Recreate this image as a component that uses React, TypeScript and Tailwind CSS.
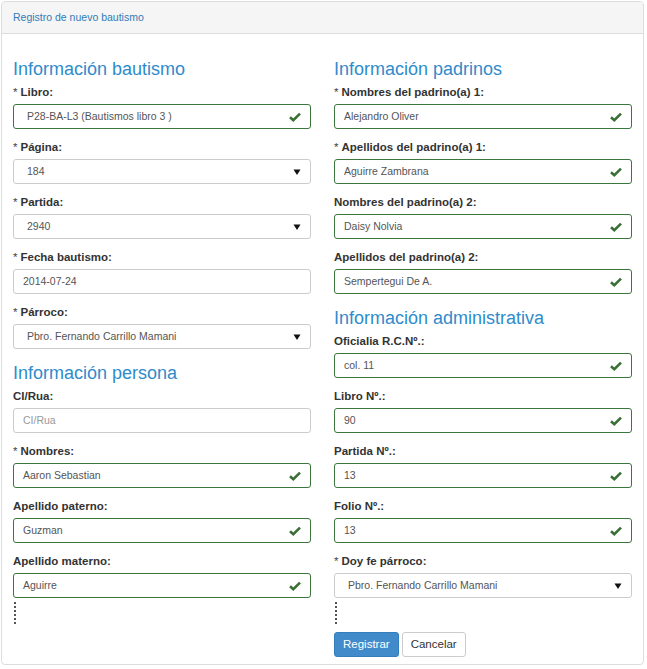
import React from 'react';

type Field = {
  label: string;
  value: string;
  required?: boolean;
  kind?: 'ok' | 'select' | 'plain' | 'placeholder';
};

const leftTop: Field[] = [
  { label: 'Libro:', value: 'P28-BA-L3 (Bautismos libro 3 )', required: true, kind: 'ok' },
  { label: 'Página:', value: '184', required: true, kind: 'select' },
  { label: 'Partida:', value: '2940', required: true, kind: 'select' },
  { label: 'Fecha bautismo:', value: '2014-07-24', required: true, kind: 'plain' },
  { label: 'Párroco:', value: 'Pbro. Fernando Carrillo Mamani', required: true, kind: 'select' },
];

const leftBottom: Field[] = [
  { label: 'CI/Rua:', value: 'CI/Rua', kind: 'placeholder' },
  { label: 'Nombres:', value: 'Aaron Sebastian', required: true, kind: 'ok' },
  { label: 'Apellido paterno:', value: 'Guzman', kind: 'ok' },
  { label: 'Apellido materno:', value: 'Aguirre', kind: 'ok' },
];

const rightTop: Field[] = [
  { label: 'Nombres del padrino(a) 1:', value: 'Alejandro Oliver', required: true, kind: 'ok' },
  { label: 'Apellidos del padrino(a) 1:', value: 'Aguirre Zambrana', required: true, kind: 'ok' },
  { label: 'Nombres del padrino(a) 2:', value: 'Daisy Nolvia', kind: 'ok' },
  { label: 'Apellidos del padrino(a) 2:', value: 'Sempertegui De A.', kind: 'ok' },
];

const rightBottom: Field[] = [
  { label: 'Oficialia R.C.Nº.:', value: 'col. 11', kind: 'ok' },
  { label: 'Libro Nº.:', value: '90', kind: 'ok' },
  { label: 'Partida Nº.:', value: '13', kind: 'ok' },
  { label: 'Folio Nº.:', value: '13', kind: 'ok' },
  { label: 'Doy fe párroco:', value: 'Pbro. Fernando Carrillo Mamani', required: true, kind: 'select' },
];

const Check = () => (
  <svg width="12" height="10" viewBox="0 0 12 10" className="shrink-0">
    <path d="M1 5.2 L4.3 8.2 L11 1.6" fill="none" stroke="#3a7035" strokeWidth="2.6" strokeLinejoin="miter" />
  </svg>
);

const Caret = () => (
  <svg width="8" height="8" viewBox="0 0 8 8" className="shrink-0">
    <path d="M0.5 1.5 H7.5 L4 7 Z" fill="#111" />
  </svg>
);

const FormField = ({ f }: { f: Field }) => {
  const kind = f.kind ?? 'plain';
  const border = kind === 'ok' ? 'border-[#3c763d]' : 'border-[#ccc]';
  const pad = kind === 'select' || f.label === 'Libro:' ? 'pl-[13px]' : 'pl-[9px]';
  const color = kind === 'placeholder' ? 'text-[#999]' : 'text-[#555]';
  return (
    <div className="mb-[12px]">
      <div className="h-[13px] mb-[5px] text-[11.5px] leading-[13px] font-bold text-[#333]">
        {f.required && <span className="font-normal text-[#444] mr-[3px]">*</span>}
        {f.label}
      </div>
      <div className={`h-[25px] border rounded-[3px] ${border} ${pad} pr-[9px] flex items-center justify-between bg-white`}>
        <span className={`text-[10.5px] ${color}`}>{f.value}</span>
        {kind === 'ok' && <Check />}
        {kind === 'select' && <Caret />}
      </div>
    </div>
  );
};

const Heading = ({ children }: { children: React.ReactNode }) => (
  <h3 className="h-[24px] leading-[24px] mb-[5px] text-[18px] text-[#2f8bcc]">{children}</h3>
);

const Dots = () => (
  <div className="flex flex-col gap-[2px] ml-[1px] -mt-[8px] mb-[6px]">
    {[0, 1, 2, 3, 4, 5].map((i) => (
      <div key={i} className="w-[2px] h-[2px] bg-[#555]" />
    ))}
  </div>
);

export default function App() {
  return (
    <div className="bg-white w-[647px] h-[669px] pt-[1px]" style={{ fontFamily: '"Liberation Sans", Arial, sans-serif' }}>
      <div className="ml-[1px] w-[643px] h-[664px] border border-[#ddd] rounded-[4px] overflow-hidden">
        <div className="h-[32px] bg-[#f5f5f5] border-b border-[#ddd] px-[11px] flex items-center">
          <span className="text-[10.5px] text-[#337ab7]">Registro de nuevo bautismo</span>
        </div>
        <div className="pt-[23px] px-[11px] grid grid-cols-2 gap-x-[23px]">
          <div>
            <Heading>Información bautismo</Heading>
            {leftTop.map((f) => <FormField key={f.label} f={f} />)}
            <Heading>Información persona</Heading>
            {leftBottom.map((f) => <FormField key={f.label} f={f} />)}
            <Dots />
          </div>
          <div>
            <Heading>Información padrinos</Heading>
            {rightTop.map((f) => <FormField key={f.label} f={f} />)}
            <Heading>Información administrativa</Heading>
            {rightBottom.map((f) => <FormField key={f.label} f={f} />)}
            <Dots />
            <div className="flex gap-[3px] mt-[8px]">
              <button className="h-[25px] px-[8px] rounded-[3px] bg-[#428bca] border border-[#357ebd] text-white text-[11.5px]">Registrar</button>
              <button className="h-[25px] px-[8px] rounded-[3px] bg-white border border-[#ccc] text-[#333] text-[11.5px]">Cancelar</button>
            </div>
          </div>
        </div>
      </div>
    </div>
  );
}
